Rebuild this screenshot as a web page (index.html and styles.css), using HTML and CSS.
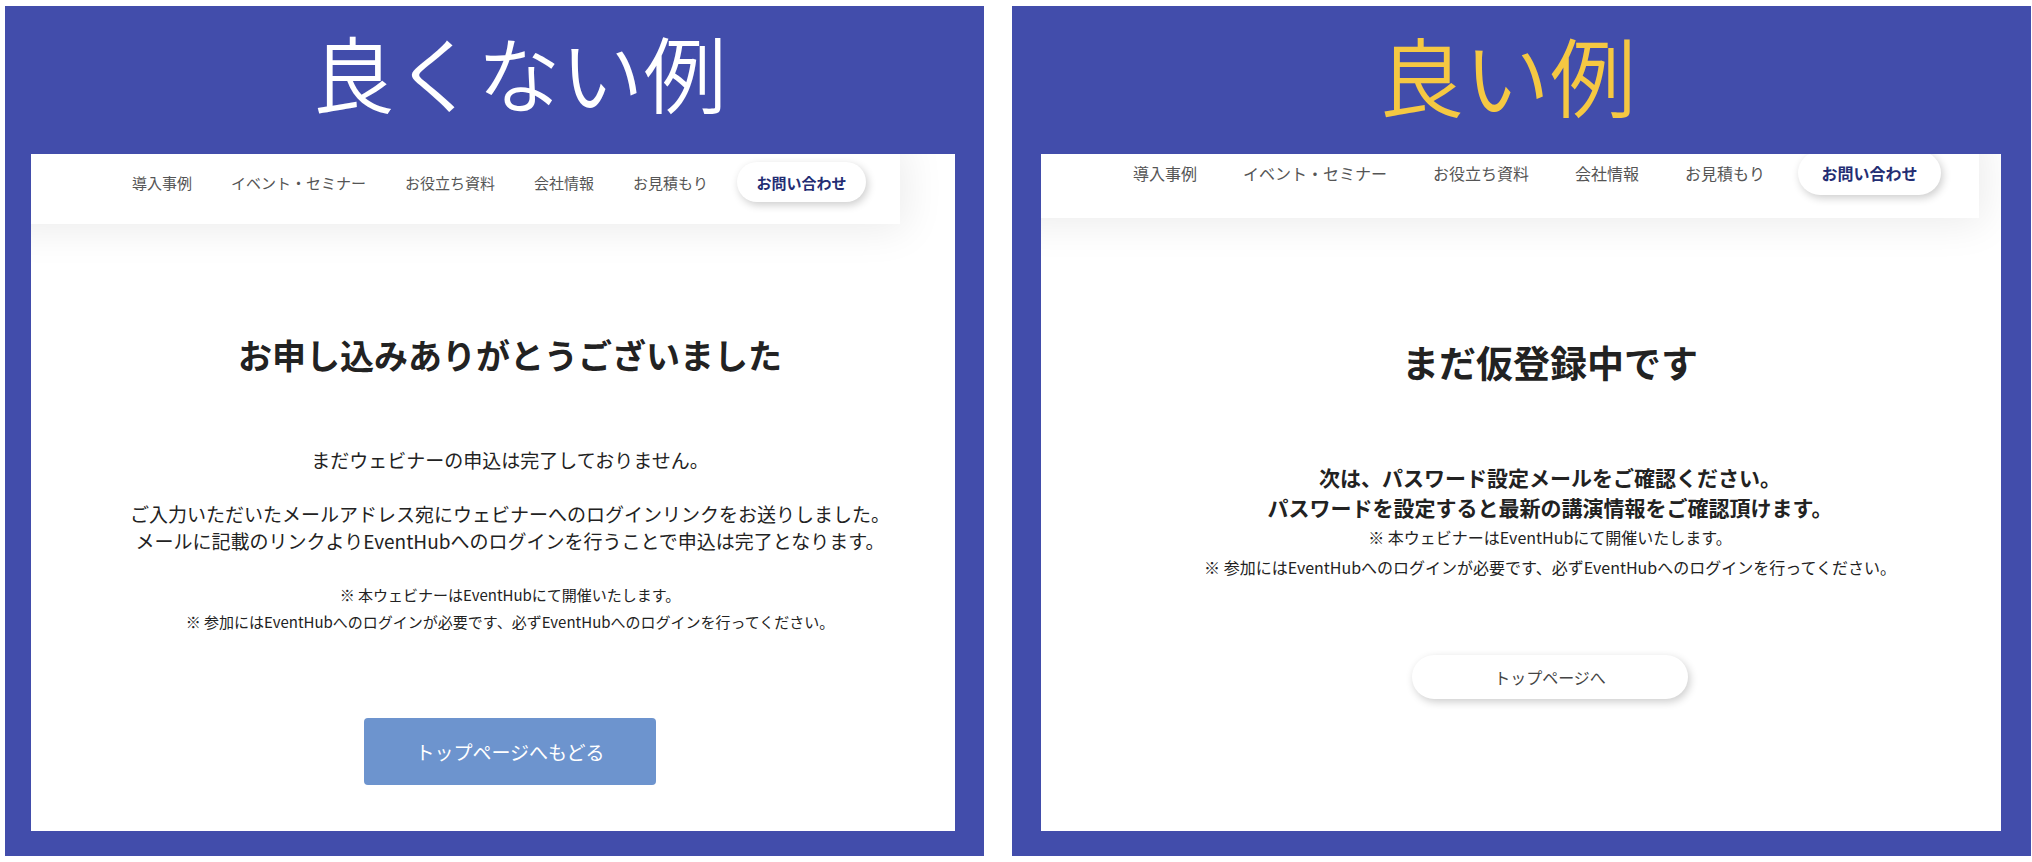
FILE: index.html
```html
<!DOCTYPE html>
<html lang="ja">
<head>
  <meta charset="UTF-8" />
  <meta name="viewport" content="width=device-width, initial-scale=1.0"/>
  <title>良くない例と良い例</title>
  <link rel="stylesheet" href="styles.css">
</head>
<body>
  <div class="container">
    <section class="panel bad">
      <h2 class="panel-title">良くない例</h2>
      <div class="screen">
        <header class="header">
          <nav class="nav">
            <a href="#">導入事例</a>
            <a href="#">イベント・セミナー</a>
            <a href="#">お役立ち資料</a>
            <a href="#">会社情報</a>
            <a href="#">お見積もり</a>
          </nav>
          <button class="contact">お問い合わせ</button>
        </header>
        <main class="content">
          <h1>お申し込みありがとうございました</h1>
          <p class="text">まだウェビナーの申込は完了しておりません。</p>
          <p class="text">ご入力いただいたメールアドレス宛にウェビナーへのログインリンクをお送りしました。<br>メールに記載のリンクよりEventHubへのログインを行うことで申込は完了となります。</p>
          <p class="note">※ 本ウェビナーはEventHubにて開催いたします。<br>※ 参加にはEventHubへのログインが必要です、必ずEventHubへのログインを行ってください。</p>
          <button class="top-button">トップページへもどる</button>
        </main>
      </div>
    </section>

    <section class="panel good">
      <h2 class="panel-title">良い例</h2>
      <div class="screen">
        <header class="header">
          <nav class="nav">
            <a href="#">導入事例</a>
            <a href="#">イベント・セミナー</a>
            <a href="#">お役立ち資料</a>
            <a href="#">会社情報</a>
            <a href="#">お見積もり</a>
          </nav>
          <button class="contact">お問い合わせ</button>
        </header>
        <main class="content">
          <h1>まだ仮登録中です</h1>
          <p class="text">次は、パスワード設定メールをご確認ください。<br>パスワードを設定すると最新の講演情報をご確認頂けます。</p>
          <p class="note">※ 本ウェビナーはEventHubにて開催いたします。<br>※ 参加にはEventHubへのログインが必要です、必ずEventHubへのログインを行ってください。</p>
          <button class="top-button">トップページへ</button>
        </main>
      </div>
    </section>
  </div>
</body>
</html>
```
FILE: styles.css
```css
* {
  box-sizing: border-box;
}

body {
  font-family: "Noto Sans CJK JP", sans-serif;
  margin: 0;
  background-color: #fff;
  color: #222;
}

.container {
  display: grid;
  grid-template-columns: 979fr 1019fr;
  gap: 28px;
  min-height: 100vh;
  padding: 6px 1px 6px 5px;
}

.panel {
  display: flex;
  flex-direction: column;
  background-color: #424dab;
  padding: 0 29px 25px 26px;
}

.panel-title {
  height: 148px;
  margin: 0;
  font-size: 83px;
  font-weight: 350;
  line-height: 130px;
  text-align: center;
  white-space: nowrap;
  color: #fff;
}

.screen {
  flex: 1;
  overflow: hidden;
  background-color: #fff;
}

/* site header, scrolled a little above the screen */
.header {
  display: flex;
  align-items: center;
  justify-content: flex-end;
  gap: 29px;
  height: 84px;
  margin: -14px 55px 0 -40px;
  padding-right: 34px;
  background-color: #fff;
  box-shadow: 6px 6px 40px rgba(0, 0, 0, 0.08);
  font-size: 15px;
  white-space: nowrap;
}

.nav {
  display: flex;
  gap: 39px;
}

.nav a {
  color: #555;
  text-decoration: none;
}

button {
  font-family: inherit;
  border: none;
  cursor: pointer;
}

.contact {
  width: 129px;
  height: 40px;
  padding: 0;
  border-radius: 22px;
  background-color: #fff;
  box-shadow: 2px 3px 8px rgba(0, 0, 0, 0.2);
  font-size: 15px;
  font-weight: bold;
  color: #232d73;
}

.content {
  padding: 106px 0 45px 34px;
  text-align: center;
}

h1 {
  margin: 0 0 66px;
  font-size: 34px;
  font-weight: bold;
  line-height: 50px;
}

.text,
.note {
  margin: 0 0 27px;
  font-size: 19px;
  line-height: 27px;
}

.note {
  font-size: 15px;
}

.top-button {
  width: 292px;
  height: 67px;
  margin-top: 56px;
  border-radius: 4px;
  background-color: #6d94ce;
  font-size: 19px;
  color: #fff;
}

.bad .panel-title {
  padding-left: 52px;
}

.good {
  padding: 0 30px 25px 29px;
}

.good .panel-title {
  padding-right: 28px;
  font-size: 86px;
  line-height: 136px;
  color: #f5c842;
}

.good .header {
  gap: 33px;
  height: 90px;
  margin: -26px 22px 0 -40px;
  padding-right: 38px;
  font-size: 16px;
}

.good .nav {
  gap: 46px;
}

.good .contact {
  width: 143px;
  height: 44px;
  font-size: 16px;
}

.good .content {
  padding: 119px 0 46px 58px;
}

.good h1 {
  margin-bottom: 75px;
  font-size: 37px;
}

.good .text,
.good .note {
  margin: 0;
  line-height: 30px;
}

.good .text {
  font-size: 21px;
  font-weight: bold;
}

.good .note {
  font-size: 16px;
}

.good .top-button {
  width: 276px;
  height: 44px;
  margin-top: 73px;
  border-radius: 22px;
  background-color: #fff;
  box-shadow: 2px 3px 8px rgba(0, 0, 0, 0.2);
  font-size: 16px;
  color: #444;
}
```
